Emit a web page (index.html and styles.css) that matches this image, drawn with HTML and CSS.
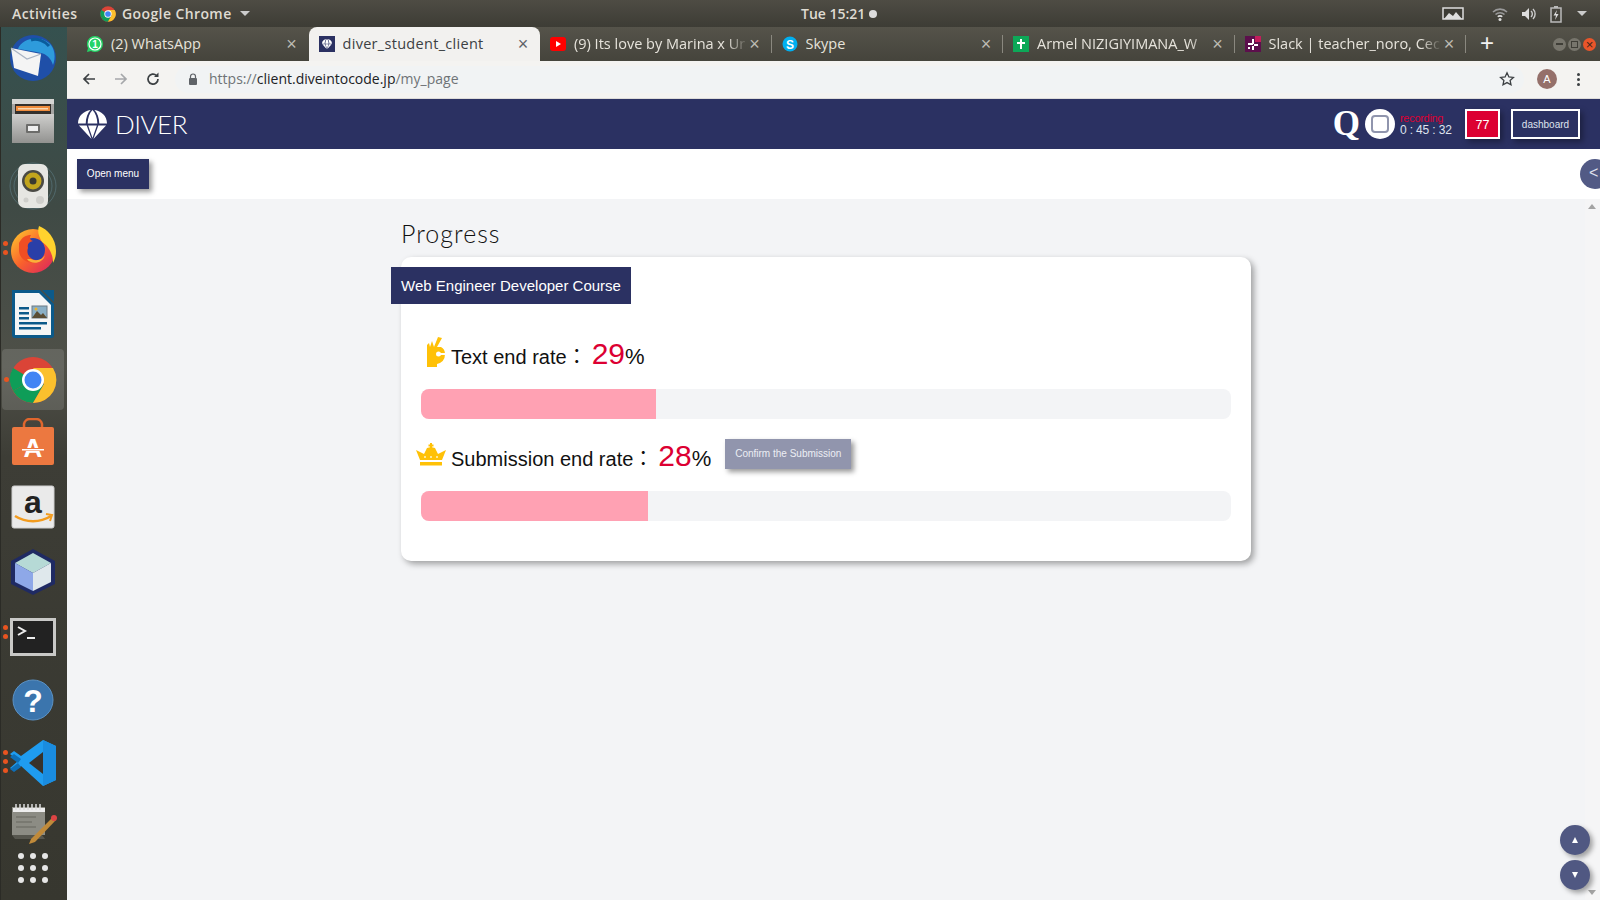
FILE: index.html
```html
<!DOCTYPE html>
<html lang="en">
<head>
<meta charset="UTF-8">
<title>diver_student_client</title>
<link rel="stylesheet" href="styles.css">
</head>
<body>

<!-- ubuntu top bar -->
<div class="topbar">
  <span class="activities">Activities</span>
  <span class="appname">
    <svg class="app-chrome" viewBox="0 0 48 48"><use href="#chrome"/></svg>
    Google Chrome
    <i class="caret"></i>
  </span>
  <span class="clock">Tue 15:21 <i class="clock-dot"></i></span>
  <div class="tray">
    <svg class="tray-screen" width="22" height="14" viewBox="0 0 22 14"><rect x="1" y="1" width="20" height="11" fill="#3c3b34" stroke="#ddd" stroke-width="1.5"/><path d="M2 12l5-6 4 3 3-4 6 7z" fill="#ddd"/></svg>
    <svg width="16" height="14" viewBox="0 0 16 14"><path d="M1 5a10 10 0 0 1 14 0M3.5 7.5a6.500 6.500 0 0 1 9 0" fill="none" stroke="#999" stroke-width="1.6"/><path d="M5.800 9.800a3 3 0 0 1 4.400 0" fill="none" stroke="#ddd" stroke-width="1.600"/><circle cx="8" cy="12.500" r="1.500" fill="#ddd"/></svg>
    <svg width="16" height="14" viewBox="0 0 16 14"><path d="M1 5h3l4-4v12l-4-4H1z" fill="#ddd"/><path d="M10 4a4 4 0 0 1 0 6M12 2a7 7 0 0 1 0 10" fill="none" stroke="#ccc" stroke-width="1.400"/></svg>
    <svg width="12" height="18" viewBox="0 0 12 18"><rect x="1" y="3" width="10" height="14" fill="none" stroke="#bbb" stroke-width="1.500"/><rect x="4" y="1" width="4" height="2" fill="#bbb"/><path d="M7 5L3.500 10.500H6L5 15l3.500-6H6z" fill="#ddd"/></svg>
    <i class="caret"></i>
  </div>
</div>

<div class="desktop">

  <!-- dock -->
  <div class="dock">
    <div class="dock-item">
      <svg class="dock-icon" viewBox="0 0 48 48">
        <circle cx="24" cy="24" r="23" fill="#1f4fa8"/>
        <path d="M9 15C13 4 30 1 40 9c6 5 7 15 4 22-2-7-7-11-12-12C24 17 16 16 9 15z" fill="#2e9bdc"/>
        <path d="M22 6c6-2 14 1 18 6" stroke="#0a5c9c" stroke-width="3" fill="none"/>
        <path d="M2 14l30 6-3 22L5 34z" fill="#f4f4f4"/>
        <path d="M2 14l16 11 14-5" fill="none" stroke="#a9b4c4" stroke-width="1.200"/>
      </svg>
    </div>
    <div class="dock-item">
      <svg class="dock-icon" viewBox="0 0 48 48">
        <defs>
          <linearGradient id="cabg" x1="0" y1="0" x2="0" y2="1"><stop offset="0" stop-color="#cfcfcd"/><stop offset="1" stop-color="#929290"/></linearGradient>
        </defs>
        <rect x="3" y="1" width="42" height="44" rx="2" fill="#a5a5a3"/>
        <rect x="3" y="1" width="42" height="5" fill="#d6d6d4"/>
        <rect x="6" y="6" width="36" height="12" fill="#34302c"/>
        <rect x="7" y="8" width="34" height="5" fill="#ee8b3c"/>
        <rect x="9" y="10" width="30" height="1.500" fill="#f7d7b0"/>
        <rect x="3" y="16" width="42" height="29" fill="url(#cabg)"/>
        <rect x="17" y="26" width="14" height="9" rx="1" fill="#6c6c6a"/>
        <rect x="19" y="28" width="10" height="5" fill="#eee"/>
      </svg>
    </div>
    <div class="dock-item">
      <svg class="dock-icon" viewBox="0 0 48 48">
        <circle cx="24" cy="24" r="23" fill="none" stroke="#5e7d85" stroke-width="1" opacity=".6"/>
        <circle cx="24" cy="24" r="19" fill="none" stroke="#5e7d85" stroke-width="1" opacity=".6"/>
        <rect x="9" y="2" width="30" height="44" rx="7" fill="#e6e6e2"/>
        <circle cx="24" cy="19" r="11" fill="#4a4a44"/>
        <circle cx="24" cy="19" r="8.500" fill="#c2a51d"/>
        <circle cx="24" cy="19" r="3.500" fill="#3a3a30"/>
        <circle cx="31" cy="38" r="4" fill="#cfcfcb"/>
        <circle cx="17" cy="38" r="2.500" fill="#cfcfcb"/>
      </svg>
    </div>
    <div class="dock-item">
      <i class="run-dot run-two-a"></i><i class="run-dot run-two-b"></i>
      <svg class="dock-icon" viewBox="0 0 48 48">
        <defs>
          <linearGradient id="foxg" x1="0" y1="0" x2="1" y2="1"><stop offset="0" stop-color="#ffcf2e"/><stop offset=".5" stop-color="#f9622c"/><stop offset="1" stop-color="#d91f63"/></linearGradient>
        </defs>
        <circle cx="24" cy="25" r="22" fill="url(#foxg)"/>
        <path d="M30 0c8 3 17 12 17 25 0 5-1 8-3 12 0-10-5-17-11-21-3-5-5-10-3-16z" fill="#ffd22e"/>
        <circle cx="24" cy="24" r="12" fill="#2a3fa8"/>
        <path d="M10 17c3-6 7-8 12-8-2 3-1 5 2 6-4 1-6 3-5 7-3 8 6 15 14 11-6 7-22 4-23-8 0-3 0-5 0-8z" fill="#f04e23"/>
        <path d="M22 33c6 3 12 0 14-4-2 9-14 10-18 4z" fill="#fbb03a"/>
      </svg>
    </div>
    <div class="dock-item">
      <svg class="dock-icon" viewBox="0 0 48 48">
        <path d="M3 0h28l14 14v31a3 3 0 0 1-3 3H6a3 3 0 0 1-3-3z" fill="#0c5a8a"/>
        <path d="M6 3h24l12 12v30H6z" fill="#f5f6f6"/>
        <path d="M33 0l12 0v12z" fill="#0c5a8a"/>
        <g fill="#0c5a8a"><rect x="10" y="17" width="10" height="2.500"/><rect x="10" y="22" width="10" height="2.500"/><rect x="10" y="27" width="10" height="2.500"/><rect x="10" y="32" width="28" height="2.500"/><rect x="10" y="37" width="22" height="2.500"/></g>
        <rect x="23" y="16" width="15" height="12" fill="#8ab0c6" stroke="#6d7b84"/>
        <path d="M23 28l5-7 4 4 2-2 4 5z" fill="#5a4d33"/>
        <circle cx="27" cy="19" r="1.500" fill="#eeb32c"/>
      </svg>
    </div>
    <div class="dock-item dock-item-active">
      <i class="run-dot run-one"></i>
      <svg class="dock-icon" viewBox="0 0 48 48"><use href="#chrome"/></svg>
    </div>
    <div class="dock-item">
      <svg class="dock-icon" viewBox="0 0 48 48">
        <path d="M15 10V6a6 6 0 0 1 6-5h6a6 6 0 0 1 6 5v4" fill="none" stroke="#e0662d" stroke-width="2.500"/>
        <rect x="3" y="9" width="42" height="38" rx="2" fill="#ec7840"/>
        <text x="24" y="39" class="dock-soft">A</text>
        <rect x="12" y="30" width="24" height="3" fill="#ec7840"/>
        <rect x="13" y="31" width="22" height="1.500" fill="#fff"/>
      </svg>
    </div>
    <div class="dock-item">
      <svg class="dock-icon nudge-1" viewBox="0 0 48 48">
        <rect x="3" y="3" width="42" height="42" rx="2" fill="#eaeaea" stroke="#d0d0d0"/>
        <text x="24" y="30" class="dock-amazon">a</text>
        <path d="M6 33c11 7 25 7 36 0" fill="none" stroke="#f39c1f" stroke-width="2.500"/>
        <path d="M37 31l6 1-2 6" fill="none" stroke="#f39c1f" stroke-width="2"/>
      </svg>
    </div>
    <div class="dock-item">
      <svg class="dock-icon nudge-2" viewBox="0 0 48 48">
        <path d="M24 1l22 12v23L24 47 2 36V13z" fill="#1f2a63"/>
        <path d="M24 5l18 10-18 10L6 15z" fill="#b6dad6"/>
        <path d="M6 15l18 10v18L6 34z" fill="#8ea8e8"/>
        <path d="M42 15L24 25v18l18-9z" fill="#dfe8ec"/>
      </svg>
    </div>
    <div class="dock-item">
      <i class="run-dot run-two-a"></i><i class="run-dot run-two-b"></i>
      <svg class="dock-icon nudge-3" viewBox="0 0 48 40">
        <rect x="1" y="1" width="46" height="38" fill="#c9c9c7"/>
        <rect x="4" y="4" width="40" height="32" fill="#222"/>
        <path d="M9 10l7 4-7 4" fill="none" stroke="#eee" stroke-width="2"/>
        <rect x="18" y="20" width="8" height="2" fill="#eee"/>
      </svg>
    </div>
    <div class="dock-item">
      <svg class="dock-icon nudge-2" viewBox="0 0 48 48">
        <circle cx="24" cy="24" r="20" fill="#3b75ad"/>
        <circle cx="24" cy="24" r="20" fill="none" stroke="#5c92c4" stroke-width="1"/>
        <text x="24" y="36" class="dock-help">?</text>
      </svg>
    </div>
    <div class="dock-item">
      <i class="run-dot run-three-a"></i><i class="run-dot run-three-b"></i><i class="run-dot run-three-c"></i>
      <svg class="dock-icon nudge-1" viewBox="0 0 48 48">
        <path d="M34 1l13 6v34l-13 6-22-20-7 5-4-3 8-7-8-7 4-3 7 5z" fill="#1f9cf0"/>
        <path d="M34 1l13 6v34l-13 6z" fill="#1a8ce0"/>
        <path d="M34 13v22l-14-11z" fill="#38322c"/>
        <path d="M1 18l4-3 7 5-3 4zM1 30l8-6 3 4-7 5z" fill="#0e6fb8"/>
      </svg>
    </div>
    <div class="dock-item">
      <svg class="dock-icon nudge-up" viewBox="0 0 48 48">
        <path d="M3 8h33v28H3z" fill="#8c8c84"/>
        <path d="M4 9l32 0v4H4z" fill="#eee"/>
        <path d="M3 36h30l3 4H6z" fill="#6a6a62" opacity=".6"/>
        <g stroke="#ddd" stroke-width="1.500"><path d="M7 5v6M11 5v6M15 5v6M19 5v6M23 5v6M27 5v6M31 5v6"/></g>
        <g stroke="#66665e" stroke-width="1.200"><path d="M7 18h20M7 23h16M7 28h20"/></g>
        <path d="M22 40l22-22 3 3-21 22-6 2z" fill="#c08a3a"/>
        <circle cx="45" cy="19" r="3" fill="#d44"/>
      </svg>
    </div>
    <div class="dock-grid">
      <i></i><i></i><i></i><i></i><i></i><i></i><i></i><i></i><i></i>
    </div>
  </div>

  <div class="chrome">

    <!-- tab strip -->
    <div class="tabs">
      <div class="tab">
        <svg class="favicon" viewBox="0 0 16 16"><path d="M8 0a8 8 0 0 1 0 16 8 8 0 0 1-4-1l-4 1 1-4A8 8 0 0 1 8 0z" fill="#25d366"/><circle cx="8" cy="8" r="6" fill="#25d366" stroke="#fff" stroke-width="1.200"/><text x="8" y="12" class="fav-num">1</text></svg>
        <span class="tab-title">(2) WhatsApp</span>
        <span class="tab-close">×</span>
      </div>
      <div class="tab tab-active">
        <svg class="favicon" viewBox="0 0 16 16"><rect width="16" height="16" fill="#2b3162"/><use href="#globe" x="3" y="3" width="10" height="10"/></svg>
        <span class="tab-title tab-title-wide">diver_student_client</span>
        <span class="tab-close">×</span>
      </div>
      <div class="tab tab-sep">
        <svg class="favicon" viewBox="0 0 16 16"><rect y="1" width="16" height="14" rx="3" fill="#f00"/><path d="M6 5l5 3-5 3z" fill="#fff"/></svg>
        <span class="tab-title tab-fade">(9) Its love by Marina x Ur</span>
        <span class="tab-close">×</span>
      </div>
      <div class="tab tab-sep">
        <svg class="favicon" viewBox="0 0 16 16"><circle cx="8" cy="8" r="7.500" fill="#00aff0"/><text x="8" y="12.500" class="fav-skype">S</text></svg>
        <span class="tab-title">Skype</span>
        <span class="tab-close">×</span>
      </div>
      <div class="tab tab-sep">
        <svg class="favicon" viewBox="0 0 16 16"><rect width="16" height="16" fill="#0da858"/><path d="M7 3h2v3h3v2H9v5H7V8H4V6h3z" fill="#fff"/></svg>
        <span class="tab-title tab-fade">Armel NIZIGIYIMANA_W</span>
        <span class="tab-close">×</span>
      </div>
      <div class="tab tab-sep">
        <svg class="favicon" viewBox="0 0 16 16"><rect width="16" height="16" fill="#5c0f4c"/><g fill="#fff"><rect x="7" y="3" width="2" height="5"/><rect x="3" y="7" width="5" height="2"/><rect x="9" y="8" width="4" height="2"/><rect x="7" y="10" width="2" height="4"/><rect x="3" y="11" width="2" height="2"/></g><rect x="10" y="0" width="6" height="6" fill="#c41d5c"/></svg>
        <span class="tab-title tab-fade">Slack | teacher_noro, Cec</span>
        <span class="tab-close">×</span>
      </div>
      <span class="tab-new">+</span>
      <div class="win-btns">
        <i class="win-btn"><b class="win-min"></b></i>
        <i class="win-btn"><b class="win-max"></b></i>
        <i class="win-btn win-close">×</i>
      </div>
    </div>

    <!-- address bar -->
    <div class="toolbar">
      <svg class="nav-icon" viewBox="0 0 16 16"><path d="M14 8H3M8 3L3 8l5 5" fill="none" stroke="#3c4043" stroke-width="1.700"/></svg>
      <svg class="nav-icon" viewBox="0 0 16 16"><path d="M2 8h11M8 3l5 5-5 5" fill="none" stroke="#a5a7aa" stroke-width="1.700"/></svg>
      <svg class="nav-icon" viewBox="0 0 16 16"><path d="M13 8a5 5 0 1 1-1.500-3.500" fill="none" stroke="#3c4043" stroke-width="1.700"/><path d="M13.500 1.500v4.500H9z" fill="#3c4043"/></svg>
      <div class="urlbar">
        <svg class="lock" viewBox="0 0 10 12"><path d="M2.500 5V3.500a2.500 2.500 0 0 1 5 0V5" fill="none" stroke="#5f6368" stroke-width="1.200"/><rect x="1" y="5" width="8" height="7" rx="1" fill="#5f6368"/></svg>
        <span class="url"><span class="url-scheme">https://</span>client.diveintocode.jp<span class="url-path">/my_page</span></span>
        <svg class="star" viewBox="0 0 16 16"><path d="M8 1.800l1.900 4.100 4.500.5-3.300 3 .9 4.400L8 11.600l-4 2.200.9-4.400-3.300-3 4.500-.5z" fill="none" stroke="#3c4043" stroke-width="1.300"/></svg>
      </div>
      <span class="avatar">A</span>
      <span class="kebab"><i></i><i></i><i></i></span>
    </div>

    <!-- page header -->
    <header class="site-header">
      <svg class="logo" viewBox="0 0 30 30"><use href="#globe"/></svg>
      <span class="logo-text">DIVER</span>
      <span class="header-q">Q</span>
      <span class="rec-btn"><i></i></span>
      <div class="rec-info">
        <span class="rec-label">recording</span>
        <span class="rec-time">0 : 45 : 32</span>
      </div>
      <span class="count-box">77</span>
      <span class="dash-btn">dashboard</span>
    </header>

    <div class="menu-bar">
      <button class="open-menu">Open menu</button>
    </div>

    <main class="page">
      <div class="container">
        <h2 class="page-title">Progress</h2>
        <section class="card">
          <div class="course-name">Web Engineer Developer Course</div>

          <div class="rate-row rate-row-first">
            <svg class="rate-icon icon-hand" viewBox="0 0 18 30"><path d="M0 30V8l2-2 1 4 2-6 2 6 4-10 4 1-5 9h4q4 2 4 7 0 8-8 10v3z" fill="#ffc107"/><circle cx="11.500" cy="17" r="2.500" fill="#fff"/><path d="M13 16h5v2h-5z" fill="#fff"/></svg>
            <span class="rate-label">Text end rate<span class="rate-colon">：</span></span>
            <span class="rate-num">29</span><span class="rate-pct">%</span>
          </div>
          <div class="bar"><div class="bar-fill" style="width: 29%"></div></div>

          <div class="rate-row rate-row-second">
            <svg class="rate-icon icon-crown" viewBox="0 0 30 23"><path d="M4 17L0 7l8 4 3-6 4-1 4 1 3 6 8-4-4 10z" fill="#ffc107"/><rect x="14" y="0" width="2" height="7" fill="#ffc107"/><rect x="12.500" y="1.500" width="5" height="2" fill="#ffc107"/><rect x="4" y="19" width="22" height="3.500" fill="#ffc107"/><circle cx="9" cy="14" r="1" fill="#fff3c4"/><circle cx="15" cy="14" r="1" fill="#fff3c4"/><circle cx="21" cy="14" r="1" fill="#fff3c4"/></svg>
            <span class="rate-label">Submission end rate<span class="rate-colon">：</span></span>
            <span class="rate-num">28</span><span class="rate-pct">%</span>
            <button class="confirm-btn">Confirm the Submission</button>
          </div>
          <div class="bar bar-last"><div class="bar-fill" style="width: 28%"></div></div>
        </section>
      </div>

      <div class="scrollbar"><i class="scroll-up"></i><i class="scroll-down"></i></div>
    </main>

    <span class="drawer-btn">&lt;</span>
    <span class="float-btn float-up"><i></i></span>
    <span class="float-btn float-down"><i></i></span>
  </div>
</div>

<!-- shared icons -->
<svg class="defs" width="0" height="0">
  <symbol id="chrome" viewBox="0 0 48 48">
    <circle cx="24" cy="24" r="23" fill="#db4437"/>
    <path d="M24 24L4 35a23 23 0 0 1 0-23z" fill="#0f9d58"/>
    <path d="M4 35A23 23 0 0 0 24 47l11-19-11-4z" fill="#0f9d58"/>
    <path d="M24 47a23 23 0 0 0 20-35H24l11 16z" fill="#fbc02d"/>
    <circle cx="24" cy="24" r="11" fill="#fff"/>
    <circle cx="24" cy="24" r="8.500" fill="#4285f4"/>
  </symbol>
  <symbol id="globe" viewBox="0 0 30 30">
    <path d="M13 0C6 1 0 6 0 14h8c0-6 2-11 5-14zM17 0c3 3 5 8 5 14h8C30 6 24 1 17 0zM15 0c-3 3-5 8-5 14h10c0-6-2-11-5-14zM1 16h8l5 14zM10.500 16h9L15 29zM21 16h8L16 30z" fill="#fff"/>
  </symbol>
</svg>

</body>
</html>
```

FILE: styles.css
```css
* {
  box-sizing: border-box;
}
html, body {
  margin: 0;
  height: 900px;
  overflow: hidden;
}
body {
  font-family: "Liberation Sans", Arial, sans-serif;
  background: #f3f4f6;
}
i {
  display: block;
}
.defs {
  position: absolute;
}

/* top bar */
.topbar {
  height: 27px;
  display: flex;
  align-items: center;
  position: relative;
  padding-left: 12px;
  background: linear-gradient(#4e4c44, #3d3c35);
  color: #dfdbd2;
  font-family: "Open Sans", sans-serif;
  font-size: 14px;
  font-weight: 600;
  letter-spacing: .4px;
}
.activities {
  width: 88px;
}
.appname {
  display: flex;
  align-items: center;
  gap: 6px;
}
.app-chrome {
  width: 16px;
  height: 16px;
}
.caret {
  width: 0;
  height: 0;
  border-left: 5px solid transparent;
  border-right: 5px solid transparent;
  border-top: 5px solid #ccc;
  margin-left: 2px;
}
.clock {
  position: absolute;
  left: 801px;
  display: flex;
  align-items: center;
  gap: 4px;
  letter-spacing: 0;
}
.clock-dot {
  width: 8px;
  height: 8px;
  border-radius: 50%;
  background: #ddd;
}
.tray {
  margin-left: auto;
  padding-right: 13px;
  display: flex;
  align-items: center;
  gap: 13px;
}
.tray-screen {
  margin-right: 15px;
}

/* dock */
.desktop {
  display: flex;
  height: 873px;
}
.dock {
  width: 67px;
  flex: none;
  background: linear-gradient(#35514f 0, #3f4a45 180px, #4f5048 340px, #3d3d36 430px, #37372f 100%);
  border-left: 1px solid #2b2b26;
}
.dock-item {
  height: 64px;
  display: flex;
  align-items: center;
  justify-content: center;
  position: relative;
  padding-right: 2px;
}
.dock-item:first-child {
  margin-top: -1px;
}
.dock-item-active {
  height: 61px;
  margin: 3px 3px 0 1px;
  padding-right: 0;
  background: rgba(255, 255, 255, .13);
  border-radius: 4px;
}
.dock-icon {
  width: 48px;
  height: 48px;
}
.nudge-1 { margin-top: 2px; }
.nudge-2 { margin-top: 4px; }
.nudge-3 { margin-top: 6px; }
.nudge-up { margin-top: -6px; }
.run-dot {
  position: absolute;
  left: 2px;
  width: 5px;
  height: 5px;
  border-radius: 50%;
  background: #e95420;
}
.run-one { top: 28px; }
.run-two-a { top: 23px; }
.run-two-b { top: 32px; }
.run-three-a { top: 20px; }
.run-three-b { top: 29px; }
.run-three-c { top: 38px; }
.dock-soft {
  font: bold 26px "Liberation Sans", sans-serif;
  fill: #fff;
  text-anchor: middle;
}
.dock-amazon {
  font: bold 32px "Liberation Sans", sans-serif;
  fill: #222;
  text-anchor: middle;
}
.dock-help {
  font: bold 32px "Liberation Sans", sans-serif;
  fill: #fff;
  text-anchor: middle;
}
.dock-grid {
  display: grid;
  grid-template-columns: repeat(3, 6px);
  gap: 6px;
  justify-content: center;
  margin-top: -5px;
  padding-right: 2px;
}
.dock-grid i {
  width: 6px;
  height: 6px;
  border-radius: 50%;
  background: #e6e6e6;
}

/* chrome window */
.chrome {
  flex: 1;
  min-width: 0;
  position: relative;
  display: flex;
  flex-direction: column;
}
.tabs {
  height: 34px;
  flex: none;
  display: flex;
  align-items: stretch;
  padding-left: 10px;
  background: linear-gradient(#55534a, #45443c);
  color: #e6e3db;
  font-family: "Open Sans", sans-serif;
  font-size: 14.500px;
}
.tab {
  width: 231.500px;
  flex: none;
  display: flex;
  align-items: center;
  padding: 0 10px;
  position: relative;
  white-space: nowrap;
}
.tab-active {
  background: #f2f1ef;
  color: #3c4043;
  border-radius: 8px 8px 0 0;
}
.tab-sep::after {
  content: "";
  position: absolute;
  right: 0;
  top: 8px;
  height: 18px;
  width: 1px;
  background: #8a887f;
}
.favicon {
  width: 16px;
  height: 16px;
  flex: none;
}
.tab-title {
  flex: 1;
  min-width: 0;
  overflow: hidden;
  margin-left: 8px;
  padding-bottom: 2px;
}
.tab-title-wide {
  letter-spacing: .3px;
}
.tab-fade {
  -webkit-mask-image: linear-gradient(to right, #000 88%, transparent);
  mask-image: linear-gradient(to right, #000 88%, transparent);
}
.tab-close {
  width: 14px;
  font-size: 18px;
  line-height: 14px;
  text-align: center;
  color: #bdbbb3;
  font-family: "Liberation Sans", sans-serif;
}
.tab-active .tab-close {
  color: #5f6368;
}
.fav-num {
  font: bold 10px "Liberation Sans", sans-serif;
  fill: #fff;
  text-anchor: middle;
}
.fav-skype {
  font: bold 12px "Liberation Sans", sans-serif;
  fill: #fff;
  text-anchor: middle;
}
.tab-new {
  margin-left: 14px;
  font-size: 24px;
  line-height: 32px;
  color: #f2f2f2;
  font-family: "Liberation Sans", sans-serif;
}
.win-btns {
  margin-left: auto;
  padding-right: 4px;
  display: flex;
  align-items: center;
  gap: 2px;
}
.win-btn {
  width: 13px;
  height: 13px;
  border-radius: 50%;
  background: #77756c;
  display: flex;
  align-items: center;
  justify-content: center;
  font-style: normal;
}
.win-min {
  width: 7px;
  height: 2px;
  background: #3f3e37;
}
.win-max {
  width: 7px;
  height: 7px;
  border: 1px solid #3f3e37;
}
.win-close {
  background: #e9552a;
  color: #40251a;
  font-size: 13px;
  font-family: "Liberation Sans", sans-serif;
}

/* toolbar */
.toolbar {
  height: 38px;
  flex: none;
  display: flex;
  align-items: center;
  padding: 0 20px 1px 14px;
  background: #f4f3f1;
  border-bottom: 1px solid #dddbd9;
}
.nav-icon {
  width: 16px;
  height: 16px;
  margin-right: 16px;
}
.urlbar {
  flex: 1;
  height: 27px;
  margin: 0 13px 0 -2px;
  padding: 0 9px 0 13px;
  display: flex;
  align-items: center;
  border-radius: 14px;
  background: #f1f3f4;
}
.lock {
  width: 10px;
  height: 12px;
  margin-right: 11px;
}
.url {
  padding-bottom: 2px;
  font-family: "Open Sans", sans-serif;
  font-size: 14px;
  color: #202124;
}
.url-scheme, .url-path {
  color: #6f7377;
}
.star {
  width: 16px;
  height: 16px;
  margin-left: auto;
}
.avatar {
  width: 20px;
  height: 20px;
  margin: 0 20px 0 0;
  border-radius: 50%;
  background: #95706a;
  color: #fff;
  font-size: 11px;
  line-height: 20px;
  text-align: center;
}
.kebab i {
  width: 3px;
  height: 3px;
  margin: 2px 0;
  border-radius: 50%;
  background: #3c4043;
}

/* page header */
.site-header {
  height: 50px;
  flex: none;
  display: flex;
  align-items: center;
  padding: 0 20px 0 11px;
  background: #2b3162;
  color: #fff;
}
.logo {
  width: 29px;
  height: 29px;
}
.logo-text {
  margin-left: 8px;
  font-family: Lato, sans-serif;
  font-weight: 300;
  font-size: 26px;
  letter-spacing: -.5px;
}
.header-q {
  margin-left: auto;
  font-family: "Liberation Serif", serif;
  font-weight: bold;
  font-size: 35px;
  line-height: 40px;
}
.rec-btn {
  width: 30px;
  height: 30px;
  margin: 0 5px;
  border-radius: 50%;
  background: #fff;
  display: flex;
  align-items: center;
  justify-content: center;
}
.rec-btn i {
  width: 18px;
  height: 18px;
  border: 2px solid #9095ad;
  border-radius: 4px;
}
.rec-info {
  width: 65px;
  display: flex;
  flex-direction: column;
  font-size: 12px;
  line-height: 12px;
}
.rec-label {
  font-size: 11px;
  letter-spacing: -.3px;
  color: #dc0032;
}
.rec-time {
  letter-spacing: -.15px;
  color: #dfe3ee;
}
.count-box {
  width: 35px;
  height: 30px;
  border: 2px solid #fff;
  background: #dc0032;
  font-size: 12.500px;
  line-height: 28px;
  text-align: center;
  box-shadow: 3px 3px 6px rgba(0, 0, 0, .35);
}
.dash-btn {
  width: 69px;
  height: 30px;
  margin-left: 11px;
  border: 2px solid #fff;
  color: #dfe3ee;
  font-size: 10px;
  line-height: 28px;
  text-align: center;
  box-shadow: 3px 3px 6px rgba(0, 0, 0, .35);
}
.menu-bar {
  height: 50px;
  flex: none;
  padding: 10px;
  background: #fff;
}
.open-menu {
  display: block;
  width: 72px;
  height: 30px;
  padding: 0 0 2px;
  border: none;
  background: #2b3162;
  color: #fff;
  font-family: "Liberation Sans", sans-serif;
  font-size: 10px;
  box-shadow: 3px 3px 5px rgba(0, 0, 0, .4);
}

/* page content */
.page {
  flex: 1;
  display: flex;
  min-height: 0;
  background: #f3f4f6;
}
.container {
  flex: 1;
  display: flex;
  flex-direction: column;
  align-items: center;
}
.page-title {
  width: 850px;
  margin: 17px 0 0;
  height: 41px;
  font-family: Lato, sans-serif;
  font-weight: 300;
  font-size: 25px;
  line-height: 34px;
  letter-spacing: 1px;
  color: #111;
}
.card {
  width: 850px;
  height: 304px;
  padding-top: 10px;
  background: #fff;
  border-radius: 10px;
  box-shadow: 3px 3px 6px rgba(0, 0, 0, .35);
}
.course-name {
  width: 240px;
  height: 37px;
  margin-left: -10px;
  background: #2b3162;
  color: #fff;
  font-size: 15px;
  line-height: 37px;
  text-align: center;
}
.rate-row {
  height: 40px;
  margin-top: 15px;
  display: flex;
  align-items: baseline;
  padding: 0 0 0 50px;
  position: relative;
  color: #111;
}
.rate-row-first {
  margin-top: 30px;
  padding-top: 3px;
}
.rate-row-second {
  padding-top: 5px;
}
.rate-label {
  font-size: 20px;
  line-height: 35px;
}
.rate-colon {
  font-family: "Noto Sans CJK JP", sans-serif;
  margin-right: 5px;
}
.rate-num {
  font-size: 30px;
  color: #dc0032;
}
.rate-pct {
  font-size: 22px;
}
.rate-icon {
  position: absolute;
}
.icon-hand {
  left: 26px;
  top: 3px;
  width: 18px;
  height: 30px;
}
.icon-crown {
  left: 15px;
  top: 9px;
  width: 30px;
  height: 23px;
}
.confirm-btn {
  align-self: flex-start;
  width: 126px;
  height: 30px;
  margin: 0 0 0 14px;
  padding: 0 0 2px;
  border: none;
  background: #9195ad;
  color: #eceef4;
  font-family: "Liberation Sans", sans-serif;
  font-size: 10px;
  box-shadow: 3px 3px 5px rgba(0, 0, 0, .4);
}
.bar {
  width: 810px;
  height: 30px;
  margin: 15px 0 0 20px;
  border-radius: 8px;
  background: #f3f4f6;
  overflow: hidden;
}
.bar-fill {
  height: 100%;
  background: #ffa1b3;
}
.bar-last {
  margin-top: 17px;
}

/* scrollbar and floating buttons */
.scrollbar {
  width: 15px;
  flex: none;
  position: relative;
  background: #f5f5f6;
}
.scroll-up, .scroll-down {
  position: absolute;
  left: 3px;
  width: 0;
  height: 0;
  border-left: 4px solid transparent;
  border-right: 4px solid transparent;
}
.scroll-up {
  top: 5px;
  border-bottom: 5px solid #a3a3a3;
}
.scroll-down {
  bottom: 5px;
  border-top: 5px solid #a3a3a3;
}
.drawer-btn {
  position: absolute;
  left: 1513px;
  top: 132px;
  width: 30px;
  height: 30px;
  border-radius: 50%;
  background: #525a85;
  color: #e0e2ee;
  font-size: 16px;
  line-height: 28px;
  padding-left: 9px;
}
.float-btn {
  position: absolute;
  left: 1493px;
  width: 30px;
  height: 30px;
  border-radius: 50%;
  background: #505882;
  box-shadow: 3px 3px 5px rgba(0, 0, 0, .35);
  display: flex;
  align-items: center;
  justify-content: center;
}
.float-btn i {
  width: 0;
  height: 0;
  border-left: 3.500px solid transparent;
  border-right: 3.500px solid transparent;
}
.float-up {
  top: 798px;
}
.float-up i {
  border-bottom: 6px solid #fff;
}
.float-down {
  top: 833px;
}
.float-down i {
  border-top: 6px solid #fff;
}
```
